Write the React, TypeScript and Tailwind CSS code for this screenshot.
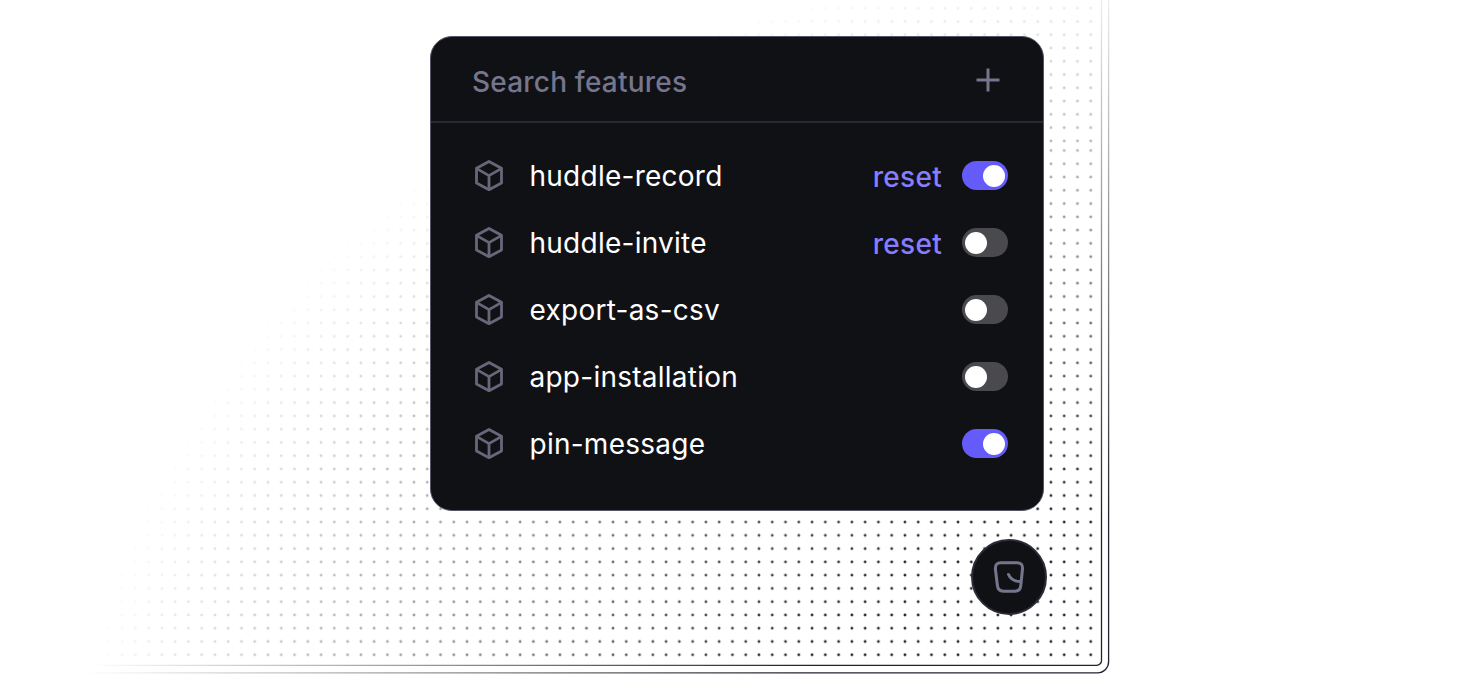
interface Feature {
  name: string;
  enabled: boolean;
  overridden?: boolean;
}

const features: Feature[] = [
  { name: "huddle-record", enabled: true, overridden: true },
  { name: "huddle-invite", enabled: false, overridden: true },
  { name: "export-as-csv", enabled: false },
  { name: "app-installation", enabled: false },
  { name: "pin-message", enabled: true },
];

function CubeIcon() {
  return (
    <svg
      className="w-8 h-8 shrink-0 text-[#68677a]"
      viewBox="0 0 32 32"
      fill="none"
      stroke="currentColor"
      strokeWidth="2.8"
      strokeLinejoin="round"
    >
      <path d="M16 1.5 28.5 8.3V23L16 29.7 3.5 23V8.3Z" />
      <path d="M3.8 8.6 16 15.6 28.2 8.6M16 15.6V29.6" />
    </svg>
  );
}

function Toggle({ enabled }: { enabled: boolean }) {
  return (
    <button
      className={`flex items-center w-[46px] h-[29px] px-[3px] rounded-full ${
        enabled ? "bg-[#655bfa] justify-end" : "bg-[#4a4a4e] justify-start"
      }`}
    >
      <span className="w-[22px] h-[22px] rounded-full bg-white" />
    </button>
  );
}

// dotted page with a double frame, fading out towards the top left
function Backdrop() {
  return (
    <svg
      className="absolute inset-0"
      width="1478"
      height="674"
      viewBox="0 0 1478 674"
      fill="none"
    >
      <defs>
        <pattern id="dots-top" x="1084.1" y="1.6" width="13.27" height="13.27" patternUnits="userSpaceOnUse">
          <circle cx="6.63" cy="6.63" r="1.4" fill="#23222c" />
        </pattern>
        <pattern id="dots-bottom" x="1084.1" y="143.9" width="13.27" height="13.27" patternUnits="userSpaceOnUse">
          <circle cx="6.63" cy="6.63" r="1.4" fill="#23222c" />
        </pattern>
        <radialGradient
          id="fade"
          gradientUnits="userSpaceOnUse"
          cx="0"
          cy="0"
          r="1"
          gradientTransform="translate(1130 800) scale(1055 845)"
        >
          <stop offset="0.34" stopColor="#fff" />
          <stop offset="1" stopColor="#fff" stopOpacity="0" />
        </radialGradient>
        <mask id="fade-mask" maskUnits="userSpaceOnUse" x="0" y="0" width="1478" height="674">
          <rect width="1478" height="674" fill="url(#fade)" />
        </mask>
      </defs>
      <g mask="url(#fade-mask)">
        <rect x="80" y="0" width="1017" height="145.5" fill="url(#dots-top)" />
        <rect x="80" y="145.5" width="1017" height="515" fill="url(#dots-bottom)" />
        <path d="M1101.5 -10V660a5 5 0 0 1-5 5.4H80" stroke="#23222c" strokeWidth="1.3" />
        <path d="M1108.6 -10V661.5a11 11 0 0 1-11 11.3H80" stroke="#23222c" strokeWidth="1.3" />
      </g>
    </svg>
  );
}

export default function App() {
  return (
    <div className="relative w-[1478px] h-[674px] overflow-hidden bg-white font-['Inter',sans-serif]">
      <Backdrop />
      <div className="relative ml-[430px] pt-9 w-[614px]">
        <section className="h-[475px] rounded-[22px] border border-[#55556a] bg-[#101115]">
          <header className="flex items-center justify-between h-[86px] pl-[41px] pr-[43px] border-b-2 border-[#292931]">
            <span className="pt-1.5 text-[28px] font-[450] tracking-[0.2px] text-[#75768d]">
              Search features
            </span>
            <svg
              className="w-6 h-6 mt-px text-[#75768d]"
              viewBox="0 0 24 24"
              stroke="currentColor"
              strokeWidth="3"
            >
              <path d="M12 0.5V23.5M0.5 12H23.5" />
            </svg>
          </header>
          <ul className="pt-[19px]">
            {features.map((feature) => (
              <li
                key={feature.name}
                className="flex items-center h-[67px] pl-[42px] pr-[35px] text-[28px]"
              >
                <CubeIcon />
                <span className="ml-[24.5px] tracking-[0.25px] text-white">
                  {feature.name}
                </span>
                <div className="flex items-center gap-5 ml-auto">
                  {feature.overridden && (
                    <button className="pt-0.5 font-[450] tracking-[0.3px] text-[#877dff]">
                      reset
                    </button>
                  )}
                  <Toggle enabled={feature.enabled} />
                </div>
              </li>
            ))}
          </ul>
        </section>
        <button className="flex items-center justify-center w-[76px] h-[76px] mt-7 ml-[541px] rounded-full border-2 border-[#2c2c38] bg-[#101115]">
          <svg
            className="w-8 h-8 text-[#75768d]"
            viewBox="0 0 32 32"
            fill="none"
            stroke="currentColor"
            strokeWidth="3"
            strokeLinecap="round"
          >
            <path d="M8 1.8H24Q30 1.8 29.5 8L27.8 24.5Q27.2 30.2 22 30.2H10.5Q5 30.2 4.4 24.5L2.4 8Q2 1.8 8 1.8Z" />
            <path d="M15.5 13.5Q18.5 20.5 27 20.5" />
          </svg>
        </button>
      </div>
    </div>
  );
}
